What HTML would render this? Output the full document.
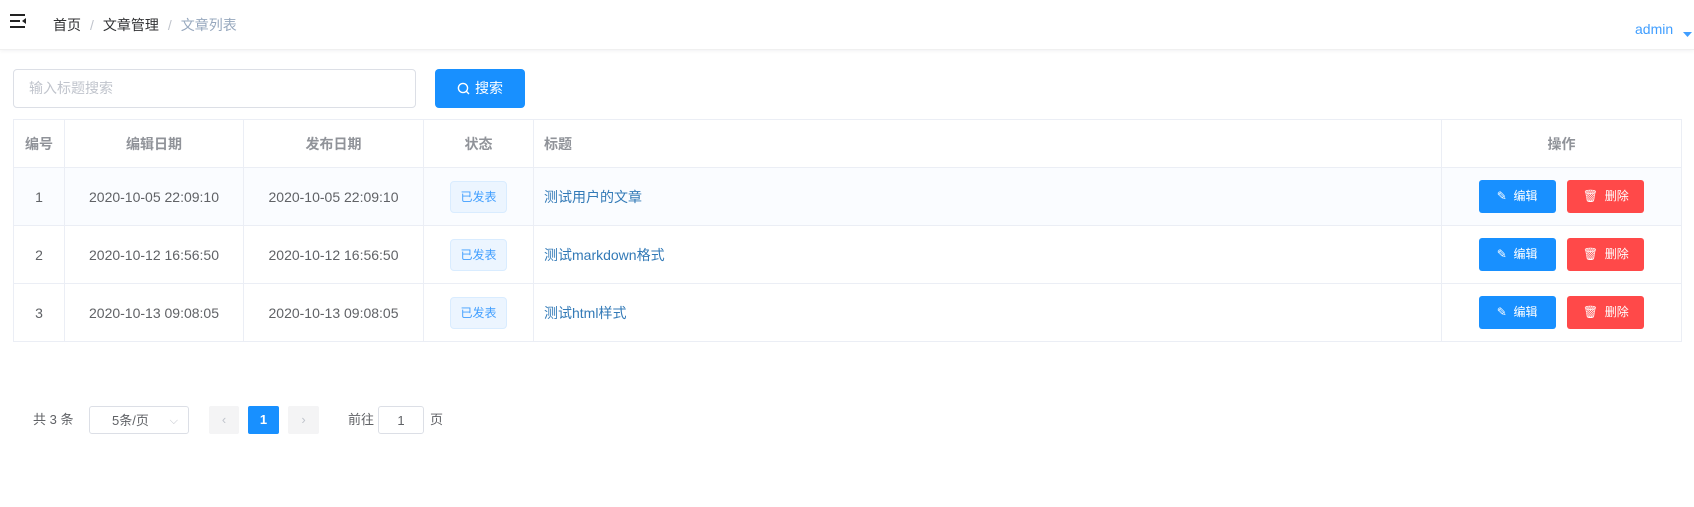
<!DOCTYPE html>
<html><head><meta charset="utf-8"><style>
*{box-sizing:border-box;margin:0;padding:0}
body{width:1694px;height:507px;background:#fff;font-family:"Liberation Sans","Noto Sans CJK SC",sans-serif;font-size:14px;color:#606266;position:relative;overflow:hidden}
.abs{position:absolute}
.hdr{left:0;top:0;width:1694px;height:50px;border-bottom:1px solid #f0f0f0;box-shadow:0 1px 4px rgba(0,21,41,.06)}
.bc{left:53px;top:15px;font-size:14px;color:#303133}
.bc span.sep{color:#c0c4cc;margin:0 9px}
.bc .last{color:#97a8be}
.input{left:13px;top:69px;width:403px;height:39px;border:1px solid #dcdfe6;border-radius:4px;padding-left:15px;line-height:37px;color:#c0c4cc;font-size:14px}
.btn{color:#fff;border-radius:4px;text-align:center;font-size:14px}
table{position:absolute;left:13px;top:119px;width:1669px;border-collapse:collapse;table-layout:fixed}
td,th{border:1px solid #ebeef5;text-align:center;font-size:14px;padding:0}
th{height:48px;color:#909399;font-weight:bold}
td{height:58px}
th.l,td.l{text-align:left;padding-left:10px}
td.l{color:#337ab7}
.tag{display:inline-block;width:57px;height:32px;line-height:30px;background:#ecf5ff;border:1px solid #d9ecff;border-radius:4px;color:#409eff;font-size:12px}
.ob{display:inline-block;width:77px;height:33px;line-height:33px;border-radius:3px;color:#fff;font-size:12px;vertical-align:middle}
.pg{top:406px;height:28px;line-height:28px;font-size:13px}
</style></head><body>
<div class="abs hdr"></div>
<svg class="abs" style="left:10px;top:14px" width="17" height="15" viewBox="0 0 17 15"><rect x="0" y="0" width="15" height="2" fill="#222"/><rect x="0" y="6" width="10" height="2" fill="#222"/><rect x="0" y="12" width="15" height="2" fill="#222"/><path d="M16 4 L12 7 L16 10Z" fill="#222"/></svg>
<div class="abs bc">首页<span class="sep">/</span>文章管理<span class="sep">/</span><span class="last">文章列表</span></div>
<div class="abs" style="left:1635px;top:21px;color:#409eff;font-size:14px">admin</div>
<svg class="abs" style="left:1683px;top:32px" width="9" height="6"><path d="M0 0H9L4.5 5Z" fill="#409eff"/></svg>
<div class="abs input">输入标题搜索</div>
<div class="abs btn" style="left:435px;top:69px;width:90px;height:39px;line-height:39px;background:#1890ff"><svg width="13" height="13" viewBox="0 0 13 13" style="vertical-align:-2px;margin-right:5px"><circle cx="6" cy="6" r="4.6" stroke="#fff" stroke-width="1.4" fill="none"/><path d="M9.3 9.3L12 12" stroke="#fff" stroke-width="1.4"/></svg>搜索</div>
<table>
<colgroup><col style="width:51px"><col style="width:179px"><col style="width:180px"><col style="width:110px"><col style="width:908px"><col></colgroup>
<tr><th>编号</th><th>编辑日期</th><th>发布日期</th><th>状态</th><th class="l">标题</th><th>操作</th></tr>
<tr style="background:#fafcff"><td>1</td><td>2020-10-05 22:09:10</td><td>2020-10-05 22:09:10</td><td><span class="tag">已发表</span></td><td class="l">测试用户的文章</td><td><span class="ob" style="background:#1890ff">✎&nbsp; 编辑</span>&nbsp;&nbsp;&nbsp;<span class="ob" style="background:#ff4949">🗑&nbsp; 删除</span></td></tr>
<tr><td>2</td><td>2020-10-12 16:56:50</td><td>2020-10-12 16:56:50</td><td><span class="tag">已发表</span></td><td class="l">测试markdown格式</td><td><span class="ob" style="background:#1890ff">✎&nbsp; 编辑</span>&nbsp;&nbsp;&nbsp;<span class="ob" style="background:#ff4949">🗑&nbsp; 删除</span></td></tr>
<tr><td>3</td><td>2020-10-13 09:08:05</td><td>2020-10-13 09:08:05</td><td><span class="tag">已发表</span></td><td class="l">测试html样式</td><td><span class="ob" style="background:#1890ff">✎&nbsp; 编辑</span>&nbsp;&nbsp;&nbsp;<span class="ob" style="background:#ff4949">🗑&nbsp; 删除</span></td></tr>
</table>
<div class="abs pg" style="left:33px">共 3 条</div>
<div class="abs pg" style="left:89px;width:100px;border:1px solid #dcdfe6;border-radius:3px;padding-left:22px">5条/页<span style="position:absolute;right:10px;color:#c0c4cc;font-size:11px">⌵</span></div>
<div class="abs pg" style="left:209px;width:30px;background:#f4f4f5;color:#c0c4cc;text-align:center;border-radius:2px">‹</div>
<div class="abs pg" style="left:248px;width:31px;background:#1890ff;color:#fff;text-align:center;font-weight:bold;border-radius:2px">1</div>
<div class="abs pg" style="left:288px;width:31px;background:#f4f4f5;color:#c0c4cc;text-align:center;border-radius:2px">›</div>
<div class="abs pg" style="left:348px">前往</div>
<div class="abs pg" style="left:378px;width:46px;border:1px solid #dcdfe6;border-radius:3px;text-align:center">1</div>
<div class="abs pg" style="left:430px">页</div>
</body></html>
